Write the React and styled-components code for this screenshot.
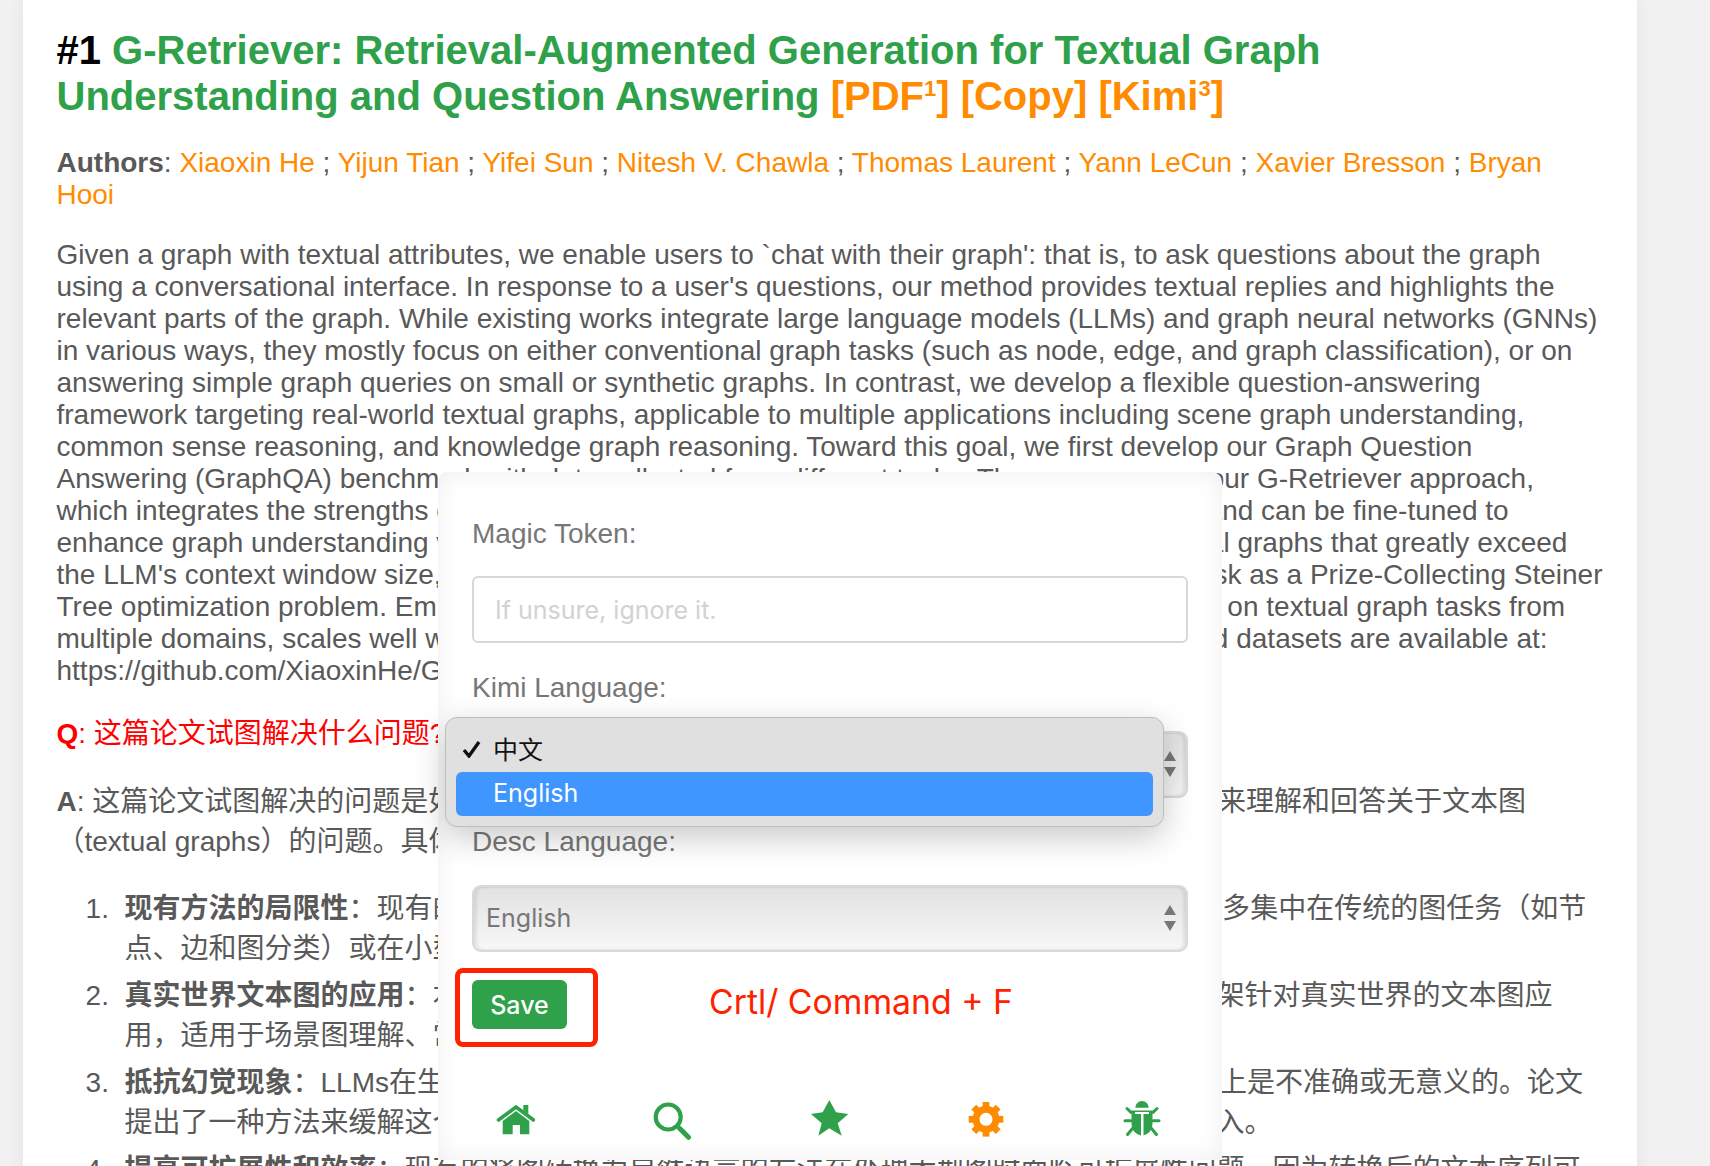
import React from 'react'
import styled, { createGlobalStyle } from 'styled-components'

const GREEN = '#2ea14a'
const ORANGE = '#ff8c00'
const SANS = '"Liberation Sans", Arial, "Noto Sans CJK SC", sans-serif'
const UI = 'Inter, "Noto Sans CJK SC", sans-serif'

const GlobalStyle = createGlobalStyle`
  html, body {
    margin: 0;
    height: 100%;
    overflow: hidden;
    background: #f1f1f1;
  }
`

const Page = styled.div`
  position: relative;
  height: 1166px;
  overflow: hidden;
  font-family: ${SANS};
`
const Card = styled.main`
  width: 1546.5px;
  height: 100%;
  margin-left: 23px;
  padding: 27px 34px 0 33.5px;
  background: #fff;
  color: #595959;
  font-size: 28px;
  line-height: 32px;
  box-shadow: 0 0 16px rgba(0, 0, 0, 0.06);
`
const Title = styled.h1`
  margin: 0 0 28px;
  font-size: 40px;
  line-height: 46px;
  color: ${GREEN};
  font-weight: 700;
`
const Rank = styled.span`
  color: #000;
`
const Tool = styled.span`
  color: ${ORANGE};
  sup {
    font-size: 22px;
    line-height: 0;
  }
`
const Authors = styled.p`
  margin: 0 0 28px;
  a {
    color: ${ORANGE};
  }
`
const Abstract = styled.p`
  margin: 0 0 27px;
`
const Question = styled.p`
  margin: 0 0 28px;
  color: #f00;
  line-height: 40px;
`
const Answer = styled.p`
  margin: 0 0 27px;
  line-height: 40px;
`
const Points = styled.ol`
  margin: 0;
  padding-left: 68px;
  line-height: 40px;
  li {
    margin-bottom: 7px;
  }
  li::marker {
    content: counter(list-item) ".  ";
  }
`

const Modal = styled.section`
  position: absolute;
  left: 438px;
  top: 472px;
  width: 784px;
  height: 688px;
  box-sizing: border-box;
  padding: 46px 34px 0;
  background: #fff;
  border-radius: 10px 10px 0 0;
  box-shadow: inset 0 0 24px rgba(0, 0, 0, 0.07);
  color: #777;
`
const Label = styled.div`
  height: 32px;
  margin-bottom: ${(p) => p.$gap}px;
  font-size: 28px;
  line-height: 32px;
`
const TokenInput = styled.input`
  display: block;
  width: 100%;
  height: 67px;
  box-sizing: border-box;
  margin-bottom: 29px;
  padding: 0 21px;
  border: 2px solid #d8d8d8;
  border-radius: 6px;
  outline: none;
  background: #fff;
  font-family: ${UI};
  font-size: 25px;
  &::placeholder {
    color: #d2d2d2;
  }
`
const SelectBox = styled.div`
  display: flex;
  align-items: center;
  justify-content: space-between;
  height: 67px;
  box-sizing: border-box;
  margin-bottom: 28px;
  padding: 0 9px 2px 12px;
  border: 2px solid #d9d9d9;
  border-radius: 9px;
  background: linear-gradient(#e2e2e2, #f7f7f7);
  box-shadow: inset 3px 0 3px rgba(0, 0, 0, 0.08), inset -3px 0 3px rgba(0, 0, 0, 0.08);
  font-family: ${UI};
  font-size: 25px;
  color: #777;
`
const Popup = styled.div`
  position: absolute;
  left: 7px;
  top: 245px;
  width: 719px;
  height: 110px;
  box-sizing: border-box;
  padding: 10px;
  background: #e0e0e0;
  border: 1px solid #bdbdbd;
  border-radius: 12px;
  box-shadow: 0 10px 32px rgba(0, 0, 0, 0.22);
  font-family: ${UI};
  font-size: 25px;
  color: #111;
`
const PopupItem = styled.div`
  display: flex;
  align-items: center;
  position: relative;
  height: 44px;
  box-sizing: border-box;
  padding-left: 37px;
  padding-bottom: ${(p) => (p.$active ? 2 : 4)}px;
  border-radius: 6px;
  background: ${(p) => (p.$active ? '#3f96ff' : 'transparent')};
  color: ${(p) => (p.$active ? '#fff' : '#111')};
`
const Check = styled.svg`
  position: absolute;
  left: 6px;
  top: 12px;
`
const SaveRow = styled.div`
  position: relative;
  height: 49px;
`
const SaveButton = styled.button`
  width: 95px;
  height: 49px;
  border: 0;
  border-radius: 6px;
  background: ${GREEN};
  color: #fff;
  font-family: ${UI};
  font-size: 25px;
  font-weight: 500;
`
const RedBox = styled.div`
  position: absolute;
  left: -17px;
  top: -12px;
  width: 143px;
  height: 79px;
  box-sizing: border-box;
  border: 5px solid #ff2200;
  border-radius: 8px;
`
const Hint = styled.div`
  position: absolute;
  left: 237px;
  top: 0;
  color: #ff2200;
  font-family: ${UI};
  font-size: 33.8px;
  line-height: 44px;
  white-space: nowrap;
`
const Nav = styled.nav`
  display: flex;
  justify-content: space-between;
  margin: 71px 26px 0 23px;
`
const Icon = styled.svg.attrs({ viewBox: '0 0 40 40', width: 40, height: 40 })`
  display: block;
  fill: ${(p) => (p.$on ? ORANGE : GREEN)};
  stroke: none;
`

const Arrows = () => (
  <svg width="14" height="28" viewBox="0 0 14 28" fill="#777">
    <path d="M7 1 13 11H1Z" />
    <path d="M7 27 13 17H1Z" />
  </svg>
)

const HomeIcon = () => (
  <Icon>
    <path d="M3.5 20 21 7 38.5 20" fill="none" stroke={GREEN} strokeWidth="3.6" strokeLinecap="round" />
    <path d="M28.3 5h5v9l-5-3.6Z" />
    <path d="M21 11 34.3 21v13.3H25V25h-7.3v9.3h-10V21Z" />
  </Icon>
)
const SearchIcon = () => (
  <Icon>
    <circle cx="16.2" cy="17" r="12.5" fill="none" stroke={GREEN} strokeWidth="4.2" />
    <path d="M27.5 28.3 36.5 37.3" stroke={GREEN} strokeWidth="5" strokeLinecap="round" />
  </Icon>
)
const StarIcon = () => (
  <Icon>
    <path d="M20.3 0 27 12.3 39.3 14 28.7 23.3 32.7 35.7 20.3 28.3 9.3 35.7 12.7 23.3 2 14 13.7 12.3Z" />
  </Icon>
)
const CogIcon = () => (
  <Icon $on>
    <circle cx="21" cy="19.3" r="10" fill="none" stroke={ORANGE} strokeWidth="7" />
    {[0, 45, 90, 135, 180, 225, 270, 315].map((deg) => (
      <rect key={deg} x="17.6" y="2" width="6.8" height="6" transform={`rotate(${deg} 21 19.3)`} />
    ))}
  </Icon>
)
const BugIcon = () => (
  <Icon>
    <path d="M13.3 7.7a6.7 6.7 0 0 1 13.4 0Z" />
    <path d="M9.5 10.5h21v13.5q0 9-10.5 12q-10.5-3-10.5-12Z" />
    <path d="M13 12h14v2H13Z M19 14h2.5v22H19Z" fill="#fff" />
    <path d="M9 12.3 5 8.5M31 12.3 35 8.5M3 20.7H9M31 20.7H37M10.7 28.3 5.5 34.5M29.3 28.3 34.5 34.5" fill="none" stroke={GREEN} strokeWidth="3" strokeLinecap="round" />
  </Icon>
)

const authors = ['Xiaoxin He', 'Yijun Tian', 'Yifei Sun', 'Nitesh V. Chawla', 'Thomas Laurent', 'Yann LeCun', 'Xavier Bresson', 'Bryan Hooi']

export default function App() {
  return (
    <Page>
      <GlobalStyle />
      <Card>
        <Title>
          <Rank>#1</Rank> G-Retriever: Retrieval-Augmented Generation for Textual Graph Understanding and Question Answering{' '}
          <Tool>[PDF<sup>1</sup>] [Copy] [Kimi<sup>3</sup>]</Tool>
        </Title>
        <Authors>
          <b>Authors</b>:{' '}
          {authors.map((a, i) => (
            <React.Fragment key={a}>
              <a>{a}</a>
              {i < authors.length - 1 ? ' ; ' : ''}
            </React.Fragment>
          ))}
        </Authors>
        <Abstract>
          Given a graph with textual attributes, we enable users to `chat with their graph': that is, to ask questions about the graph using a conversational interface. In response to a user's questions, our method provides textual replies and highlights the relevant parts of the graph. While existing works integrate large language models (LLMs) and graph neural networks (GNNs) in various ways, they mostly focus on either conventional graph tasks (such as node, edge, and graph classification), or on answering simple graph queries on small or synthetic graphs. In contrast, we develop a flexible question-answering framework targeting real-world textual graphs, applicable to multiple applications including scene graph understanding, common sense reasoning, and knowledge graph reasoning. Toward this goal, we first develop our Graph Question Answering (GraphQA) benchmark with data collected from different tasks. Then, we propose our G-Retriever approach, which integrates the strengths of GNNs, LLMs, and Retrieval Augmented Generation (RAG), and can be fine-tuned to enhance graph understanding via soft prompting and graph encoding. To allow for large textual graphs that greatly exceed the LLM's context window size, G-Retriever performs RAG over a graph and formalizes the task as a Prize-Collecting Steiner Tree optimization problem. Empirical evaluations show that our method outperforms baselines on textual graph tasks from multiple domains, scales well with larger graph sizes and mitigates hallucination. Our code and datasets are available at: https://github.com/XiaoxinHe/G-Retriever
        </Abstract>
        <Question><b>Q</b>: 这篇论文试图解决什么问题?</Question>
        <Answer>
          <b>A</b>: 这篇论文试图解决的问题是如何让用户通过对话界面与图进行交互，以及&#8201;如何利用对话方式来理解和回答关于文本图（textual graphs）的问题。具体来说，论文的主要内容包括以下几个方面：
        </Answer>
        <Points>
          <li><b>现有方法的局限性</b>：现有的大型语言模型和图神经网络的集成工作&#8201;虽然取得了进展，但大多集中在传统的图任务（如节点、边和图分类）或在小型或合成图上回答简单的图查询。</li>
          <li><b>真实世界文本图的应用</b>：本篇论文开发了一种灵活的问题回答系统和相应的方法与实验框架针对真实世界的文本图应用，适用于场景图理解、常识推理和知识图推理等多种应用。</li>
          <li><b>抵抗幻觉现象</b>：LLMs在生成回答时可能会出现幻觉现象，即LLMs生成的&#8201;文本内容在事实上是不准确或无意义的。论文提出了一种方法来缓解这个问题，通过从图中检索相关子图信息并将其作为额外上下文输入。</li>
          <li><b>提高可扩展性和效率</b>：现有的将图转换为自然语言的方法在处理大型图时面临可扩展性问题。因为转换后的文本序列可能会超出上下文窗口的限制。</li>
        </Points>
      </Card>
      <Modal>
        <Label $gap={26}>Magic Token:</Label>
        <TokenInput placeholder="If unsure, ignore it." />
        <Label $gap={27}>Kimi Language:</Label>
        <SelectBox>中文<Arrows /></SelectBox>
        <Label $gap={27}>Desc Language:</Label>
        <SelectBox>English<Arrows /></SelectBox>
        <SaveRow>
          <SaveButton>Save</SaveButton>
          <RedBox />
          <Hint>Crtl/ Command + F</Hint>
        </SaveRow>
        <Nav>
          <HomeIcon />
          <SearchIcon />
          <StarIcon />
          <CogIcon />
          <BugIcon />
        </Nav>
        <Popup>
          <PopupItem>
            <Check width="20" height="18" viewBox="0 0 20 18" fill="none" stroke="#111" strokeWidth="3.4"><path d="M2 10 7 16 17 2" /></Check>
            中文
          </PopupItem>
          <PopupItem $active>English</PopupItem>
        </Popup>
      </Modal>
    </Page>
  )
}
